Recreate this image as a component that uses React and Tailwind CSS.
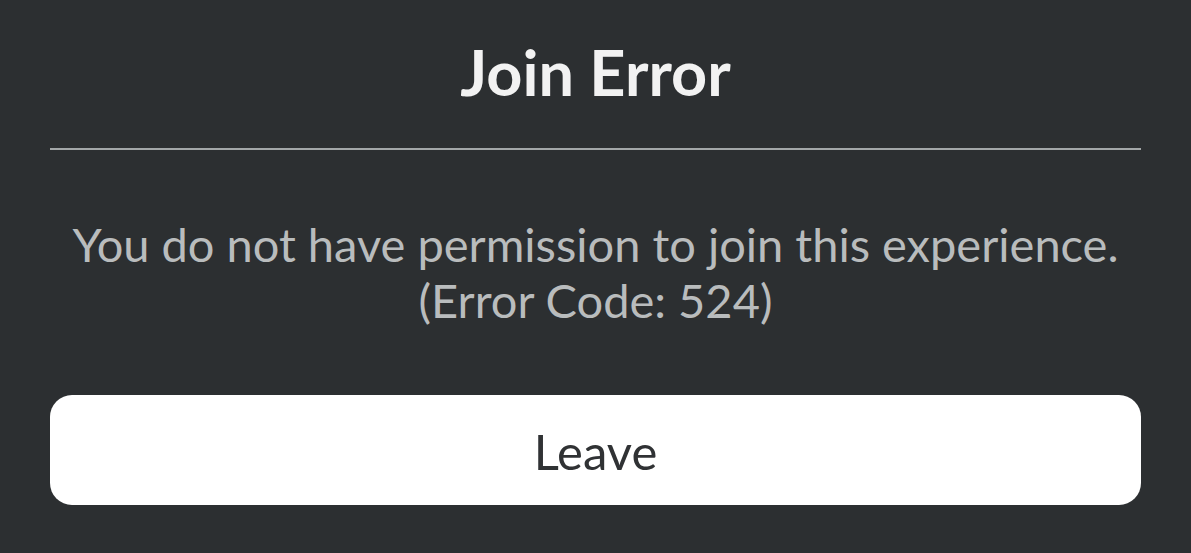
import React from 'react';

const JoinErrorDialog = () => {
  return (
    <div
      className="w-full h-[553px] bg-[#2c2f31] px-[50px] flex flex-col"
      style={{ fontFamily: 'Lato, "Open Sans", sans-serif' }}
    >
      {/* Header */}
      <div className="h-[148px] flex items-center justify-center">
        <h1 className="text-[63px] leading-none font-bold text-[#f2f2f2] pb-[6px]">Join Error</h1>
      </div>
      <div className="h-[2px] bg-[#a3a7a8]" />

      {/* Message */}
      <div className="flex flex-col items-center text-[47px] leading-[56px] text-[#b9bcbd] pt-[66px]">
        <p>You do not have permission to join this experience.</p>
        <p>(Error Code: 524)</p>
      </div>

      {/* Action */}
      <button className="mt-[67px] h-[110px] w-full bg-white rounded-[22px] text-[49px] text-[#303234] flex items-center justify-center pt-[4px]">
        Leave
      </button>
    </div>
  );
};

export default function App() {
  return <JoinErrorDialog />;
}
